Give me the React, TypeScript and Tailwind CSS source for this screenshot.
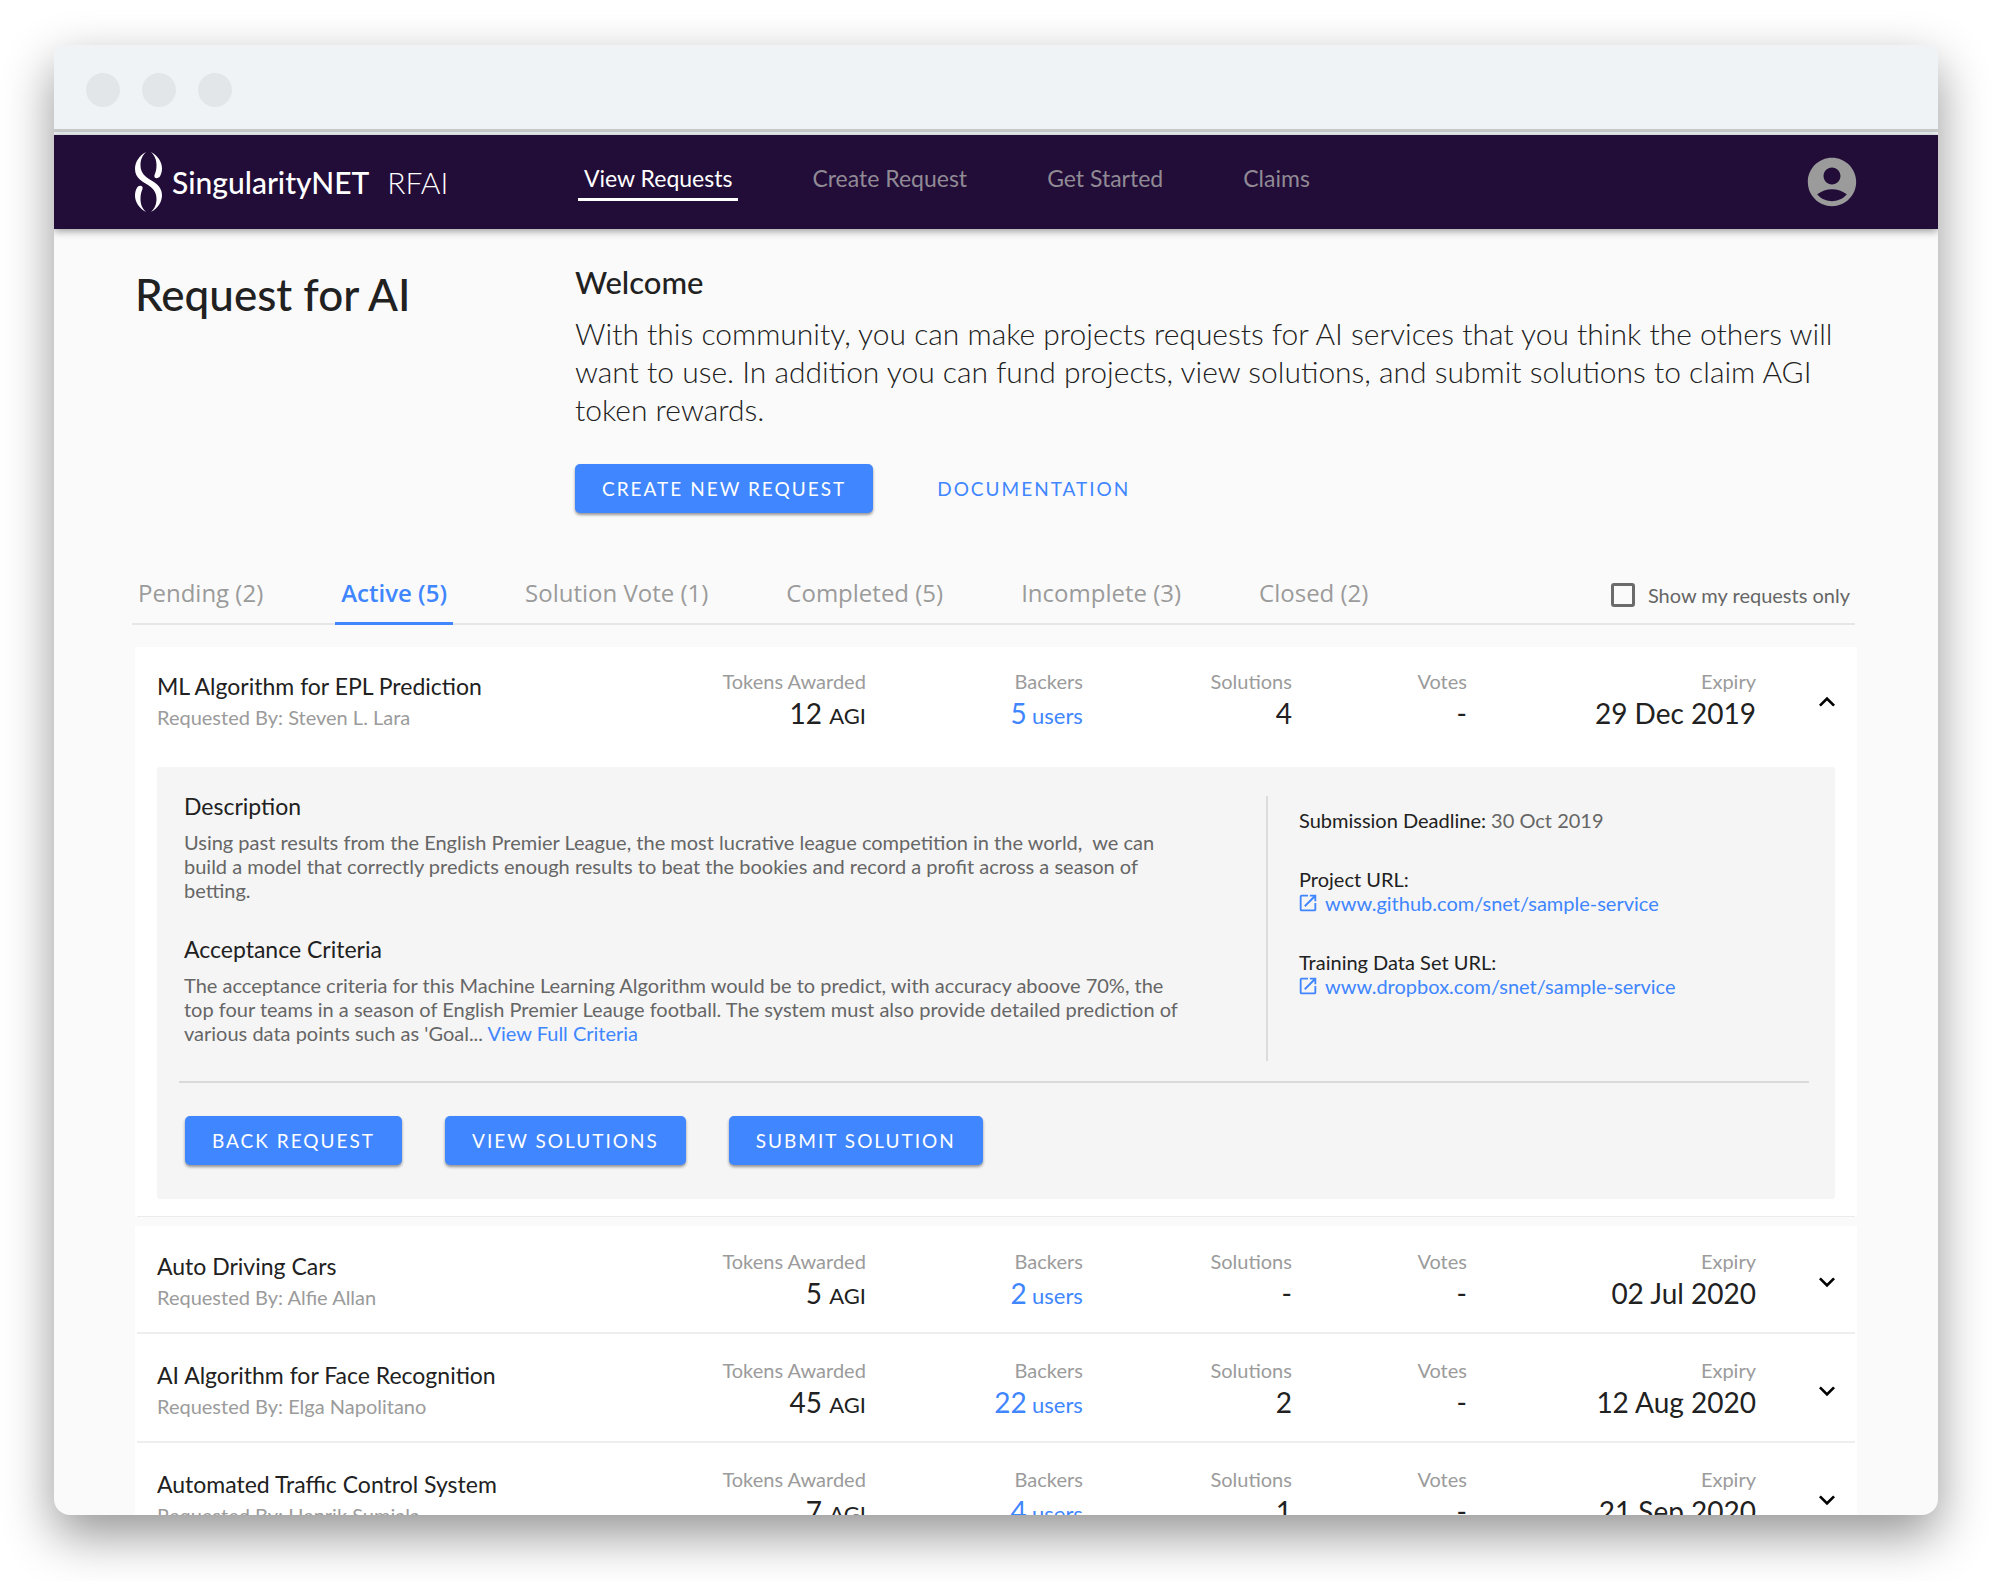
import { useState } from "react";
import { MdAccountCircle, MdExpandLess, MdExpandMore, MdOpenInNew } from "react-icons/md";

type Request = {
  title: string;
  by: string;
  tokens: number;
  backers: number;
  solutions: string;
  votes: string;
  expiry: string;
};

const openRequest: Request = {
  title: "ML Algorithm for EPL Prediction",
  by: "Steven L. Lara",
  tokens: 12,
  backers: 5,
  solutions: "4",
  votes: "-",
  expiry: "29 Dec 2019",
};

const otherRequests: Request[] = [
  { title: "Auto Driving Cars", by: "Alfie Allan", tokens: 5, backers: 2, solutions: "-", votes: "-", expiry: "02 Jul 2020" },
  { title: "AI Algorithm for Face Recognition", by: "Elga Napolitano", tokens: 45, backers: 22, solutions: "2", votes: "-", expiry: "12 Aug 2020" },
  { title: "Automated Traffic Control System", by: "Henrik Sumiala", tokens: 7, backers: 4, solutions: "1", votes: "-", expiry: "21 Sep 2020" },
];

const navItems = ["View Requests", "Create Request", "Get Started", "Claims"];
const tabs = ["Pending (2)", "Active (5)", "Solution Vote (1)", "Completed (5)", "Incomplete (3)", "Closed (2)"];

function Logo() {
  const strand =
    "M16 0C23 4 27 10 27 16.500 27 20 26 23 24.500 25 22.500 27 18.500 26.500 19.500 23 21 19.500 21.500 17 21.500 13 21.500 8 20 4 16 0z";
  return (
    <svg viewBox="0 0 27 60" className="h-[60px] w-[27px] shrink-0" fill="#fff" aria-hidden="true">
      <path d="M11 0C4 4 0 10 0 17 0 26 8 30 13 33 19 37 21.500 41 21.500 47 21.500 52 20 56 16 60 23 56 27 50 27 43 27 34 19 30 14 27 8 23 5.500 19 5.500 13 5.500 8 7 4 11 0z" />
      <path d={strand} />
      <path transform="rotate(180 13.500 30)" d={strand} />
    </svg>
  );
}

function PrimaryButton({ children }: { children: string }) {
  return (
    <button
      type="button"
      className="h-[49px] rounded-[5px] bg-[#4086ff] px-[27px] text-[19px] leading-6 tracking-[2px] text-white shadow-[0_2px_3px_rgba(0,0,0,0.4)]"
    >
      {children}
    </button>
  );
}

function Stat({ label, children }: { label: string; children: React.ReactNode }) {
  return (
    <div className="text-right">
      <dt className="text-[20px] leading-6 text-[#9b9b9b]">{label}</dt>
      <dd className="mt-[3px] text-[28px] leading-[34px] text-[#212121]">{children}</dd>
    </div>
  );
}

function RequestSummary({ request, open }: { request: Request; open?: boolean }) {
  return (
    <div className="flex px-[22px]">
      <div className="w-[28%] shrink-0 pt-[3px]">
        <h3 className="text-[23px] leading-7 whitespace-nowrap text-[#212121]">{request.title}</h3>
        <p className="mt-[5px] text-[20px] leading-6 text-[#9b9b9b]">Requested By: {request.by}</p>
      </div>
      <dl className="grid flex-1 grid-cols-[239fr_217fr_209fr_175fr_289fr]">
        <Stat label="Tokens Awarded">
          {request.tokens} <span className="text-[22px] leading-none">AGI</span>
        </Stat>
        <Stat label="Backers">
          <a href="#backers" className="text-[#4086ff]">
            {request.backers} <span className="-ml-0.5 text-[22px] leading-none">users</span>
          </a>
        </Stat>
        <Stat label="Solutions">{request.solutions}</Stat>
        <Stat label="Votes">{request.votes}</Stat>
        <Stat label="Expiry">{request.expiry}</Stat>
      </dl>
      <div className="-mr-2 flex w-[87px] shrink-0 items-start justify-end pt-[17px]">
        <button type="button" aria-expanded={!!open} aria-label={"Toggle " + request.title} className="text-black">
          {open ? <MdExpandLess size={32} /> : <MdExpandMore size={32} />}
        </button>
      </div>
    </div>
  );
}

function LinkRow({ label, url }: { label: string; url: string }) {
  return (
    <div className="mt-[35px]">
      <p className="text-[#212121]">{label}</p>
      <a href={"https://" + url} className="-ml-0.5 flex items-center gap-1.5 text-[#4086ff]">
        <MdOpenInNew size={22} />
        {url}
      </a>
    </div>
  );
}

function RequestDetail() {
  return (
    <div className="mx-[22px] mt-[37px] mb-[17px] rounded-[3px] bg-[#f5f5f5] pb-[34px] text-[20px] leading-6 text-[#666]">
      <div className="grid grid-cols-[1109fr_569fr]">
        <div className="pt-[25px] pb-4 pl-[27px]">
          <h4 className="text-[23px] leading-7 text-[#212121]">Description</h4>
          <p className="mt-2.5 max-w-[1006px]">
            Using past results from the English Premier League, the most lucrative league competition in the world,&nbsp; we can
            build a model that correctly predicts enough results to beat the bookies and record a profit across a season of
            betting.
          </p>
          <h4 className="mt-[33px] text-[23px] leading-7 text-[#212121]">Acceptance Criteria</h4>
          <p className="mt-2.5 max-w-[1006px]">
            The acceptance criteria for this Machine Learning Algorithm would be to predict, with accuracy aboove 70%, the top
            four teams in a season of English Premier Leauge football. The system must also provide detailed prediction of
            various data points such as 'Goal...{" "}
            <a href="#criteria" className="text-[#4086ff]">
              View Full Criteria
            </a>
          </p>
        </div>
        <div className="mt-[29px] border-l-2 border-[#dcdcdc] pt-3 pl-[31px]">
          <p>
            <span className="text-[#212121]">Submission Deadline:</span> 30 Oct 2019
          </p>
          <LinkRow label="Project URL:" url="www.github.com/snet/sample-service" />
          <LinkRow label="Training Data Set URL:" url="www.dropbox.com/snet/sample-service" />
        </div>
      </div>
      <hr className="mt-5 mr-[26px] ml-[22px] border-t-2 border-[#dadada]" />
      <div className="mt-[33px] flex gap-[43px] pl-7">
        <PrimaryButton>BACK REQUEST</PrimaryButton>
        <PrimaryButton>VIEW SOLUTIONS</PrimaryButton>
        <PrimaryButton>SUBMIT SOLUTION</PrimaryButton>
      </div>
    </div>
  );
}

export default function App() {
  const [mineOnly, setMineOnly] = useState(false);
  const [tab, setTab] = useState("Active (5)");

  return (
    <div className="flex h-screen flex-col bg-white px-[54px] pt-[45px] pb-[66px] font-['Lato',sans-serif]">
      <div className="flex min-h-0 flex-1 flex-col overflow-hidden rounded-t-xl rounded-b-2xl bg-[#fafafa] shadow-[0_20px_50px_rgba(0,0,0,0.42)]">
        <div className="flex h-[90px] shrink-0 flex-col bg-[#eff3f6]">
          <div className="flex flex-1 gap-[22px] border-b-3 border-[#cacbcb] pt-7 pl-8">
            <span className="size-[34px] rounded-full bg-[#e2e6e8]" />
            <span className="size-[34px] rounded-full bg-[#e2e6e8]" />
            <span className="size-[34px] rounded-full bg-[#e2e6e8]" />
          </div>
          <div className="h-[3px]" />
        </div>

        <header className="relative flex h-[94px] shrink-0 items-center bg-[#220c38] px-[81px] shadow-[0_2px_8px_rgba(0,0,0,0.4)]">
          <a href="#home" className="flex w-[440px] items-center text-[30px] leading-9 text-white">
            <Logo />
            <span className="ml-2.5 font-medium">SingularityNET</span>
            <span className="ml-[18px] font-light">RFAI</span>
          </a>
          <nav className="ml-[3px] flex gap-[68px]">
            {navItems.map((item, i) => (
              <a
                key={item}
                href={"#" + item.replace(" ", "-").toLowerCase()}
                className={
                  "border-b-3 px-1.5 pb-1.5 text-[23px] leading-7 " +
                  (i === 0 ? "border-white text-white" : "border-transparent text-[#908a94]")
                }
              >
                {item}
              </a>
            ))}
          </nav>
          <button type="button" aria-label="Account" className="-mr-1 ml-auto text-[#9b9b9b]">
            <MdAccountCircle size={58} />
          </button>
        </header>

        <main className="px-[81px] pt-[34px]">
          <section className="flex">
            <h1 className="mt-[5px] w-[440px] shrink-0 text-[44px] leading-[52px] font-medium text-[#212121]">Request for AI</h1>
            <div>
              <h2 className="text-[31px] leading-[38px] font-medium text-[#212121]">Welcome</h2>
              <p className="mt-[13px] text-[30px] leading-[38px] font-light text-[#212121]">
                With this community, you can make projects requests for AI services that you think the others will want to use. In
                addition you can fund projects, view solutions, and submit solutions to claim AGI token rewards.
              </p>
              <div className="mt-9 flex items-center gap-16">
                <PrimaryButton>CREATE NEW REQUEST</PrimaryButton>
                <a href="#docs" className="text-[19px] leading-6 tracking-[2px] text-[#4086ff]">
                  DOCUMENTATION
                </a>
              </div>
            </div>
          </section>

          <div className="mt-[65px] mr-0.5 -ml-[3px] flex items-start shadow-[inset_0_-2px_0_#e6e6e6]">
            <div role="tablist" className="flex gap-[66px] font-['Open_Sans',sans-serif]">
              {tabs.map((t) => (
                <button
                  key={t}
                  type="button"
                  role="tab"
                  aria-selected={t === tab}
                  onClick={() => setTab(t)}
                  className={
                    "border-b-3 px-1.5 pb-3.5 text-[24px] leading-[30px] " +
                    (t === tab ? "border-[#4086ff] font-semibold text-[#4086ff]" : "border-transparent text-[#9b9b9b]")
                  }
                >
                  {t}
                </button>
              ))}
            </div>
            <label className="mt-[5px] mr-[5px] ml-auto flex items-center gap-[13px] text-[20px] leading-6 text-[#666]">
              <input
                type="checkbox"
                checked={mineOnly}
                onChange={(e) => setMineOnly(e.target.checked)}
                className="size-6 appearance-none rounded-[3px] border-3 border-[#6b6b6b] checked:bg-[#6b6b6b]"
              />
              Show my requests only
            </label>
          </div>

          <article className="mt-[22px] bg-white pt-[22px]">
            <RequestSummary request={openRequest} open />
            <RequestDetail />
            <hr className="mx-0.5 border-[#ebebeb]" />
          </article>

          <div className="mt-[9px] bg-white">
            {otherRequests.map((r) => (
              <article key={r.title} className="pt-6 first:pt-[23px]">
                <RequestSummary request={r} />
                <hr className="mx-0.5 mt-[22px] border-t-2 border-[#eeeeee]" />
              </article>
            ))}
          </div>
        </main>
      </div>
    </div>
  );
}
